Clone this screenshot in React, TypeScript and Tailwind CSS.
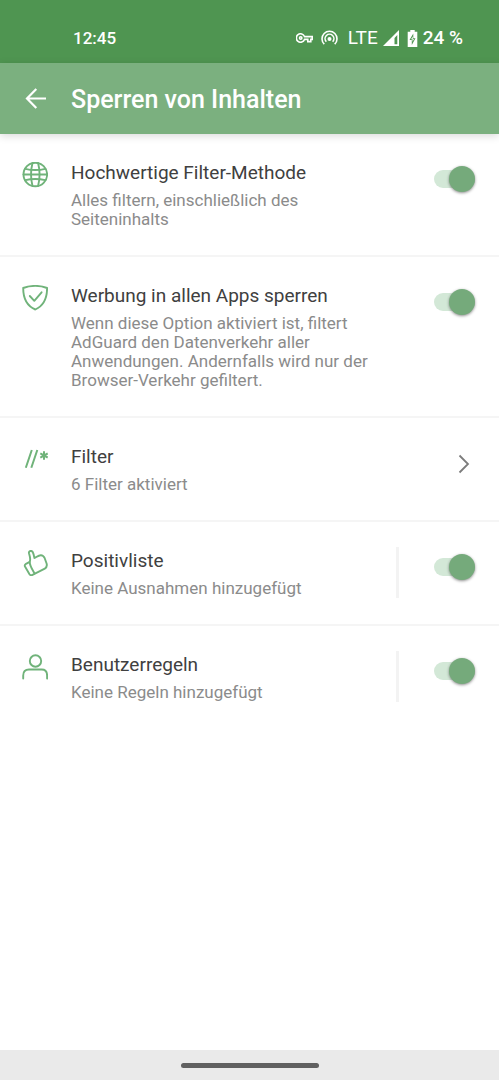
import React from "react";

interface SettingRowProps {
  id: string;
  icon: React.ReactNode;
  title: string;
  description: string;
  divided?: boolean;
  link?: boolean;
}

const iconProps = {
  width: 26,
  height: 26,
  viewBox: "0 0 26 26",
  fill: "none",
  stroke: "currentColor",
  strokeWidth: 1.9,
  strokeLinecap: "round",
  strokeLinejoin: "round",
  "aria-hidden": true
} as const;

function GlobeIcon() {
  return (
    <svg {...iconProps}>
      <circle cx="13.300" cy="12.5" r="11.8" />
      <path d="M10.500 1C8.700 8 8.700 17 10.500 24M16.100 1C17.900 8 17.900 17 16.100 24" />
      <path d="M3.300 6.800C9.300 8.300 17.300 8.300 23.300 6.800M1.500 12.500H25.100M3.300 18.200C9.300 16.700 17.300 16.700 23.300 18.200" />
    </svg>
  );
}

function ShieldIcon() {
  return (
    <svg {...iconProps}>
      <path d="M13.300 .9C9.300 .9 4.800 1.500 1.200 3C1.200 12.500 3.800 20.500 13.300 24.500C22.500 20.500 25.100 12.500 25.100 3C21.500 1.500 17.300 .9 13.300 .9Z" />
      <path d="M7.800 11L12.300 15.800L19.600 7.300" />
    </svg>
  );
}

function FilterIcon() {
  return (
    <svg {...iconProps} strokeLinecap="butt">
      <path d="M3.800 21.800L9.800 4M9.300 21.800L15.300 4" strokeWidth="2" />
      <path d="M22 5.200V13.800M18.300 7.400L25.700 11.600M18.300 11.600L25.700 7.400" strokeWidth="2" />
    </svg>
  );
}

function ThumbIcon() {
  return (
    <svg {...iconProps}>
      <path d="M4 13.800L7.700 11.800C9 9.200 7.600 5.500 7 3.300C6.400.8 9.700.2 10.700 2C11.700 3.900 12 6 12.400 8C14.500 7 16.500 5.300 18.800 5.200C21 5.100 22 6.700 22.700 8.200L24.600 13.500C25.300 16 24.600 17.500 22.800 18.600L10.500 24.800C9.200 25.500 8.200 25.200 7.500 24.200L3 16.500C2.500 15.500 2.900 14.500 4 13.800Z" />
      <path d="M7.700 12C7.600 15.500 10 19 12.600 23.500" />
    </svg>
  );
}

function UserIcon() {
  return (
    <svg {...iconProps}>
      <circle cx="13.500" cy="7" r="5.700" />
      <path d="M1.200 24.500V21.500C1.200 17.500 3.200 15.500 7 15.500H19.700C23.500 15.500 25.100 17.500 25.100 21.500V24.500" />
    </svg>
  );
}

function StatusBar() {
  return (
    <div className="flex h-[63px] items-center bg-[#4f9551] pt-[13px] pr-9 pl-[73px] text-[19px] leading-6 font-medium text-white">
      <span className="text-[17px]">12:45</span>
      <div className="ml-auto flex items-center">
        <svg className="mr-2" width="17" height="10" viewBox="0 0 17 10" fill="none" stroke="currentColor" strokeWidth="1.600" aria-hidden="true">
          <path d="M8.500 3.600H16.200V6.400H14.800V8.600H11.800V6.400H8.500A4.200 4.200 0 1 1 8.500 3.600Z" />
          <circle cx="4.700" cy="5" r="1.200" />
        </svg>
        <svg className="mr-[10px]" width="17" height="16" viewBox="0 0 17 16" fill="none" stroke="currentColor" strokeWidth="1.600" aria-hidden="true">
          <path d="M3.300 14.200A7.500 7.500 0 1 1 13.700 14.200M5.300 11.700A4.400 4.400 0 1 1 11.700 11.700" />
          <circle cx="8.500" cy="9" r="2" fill="currentColor" stroke="none" />
        </svg>
        <span className="mr-[5px] font-normal">LTE</span>
        <svg className="mr-[7px]" width="17" height="16" viewBox="0 0 17 16" fill="currentColor" aria-hidden="true">
          <path fillRule="evenodd" d="M16 0V16H0ZM14.300 5L11.500 8V14.300H14.300Z" />
        </svg>
        <svg className="mr-[5px]" width="11" height="17" viewBox="0 0 11 17" aria-hidden="true">
          <path
            fill="currentColor"
            fillRule="evenodd"
            d="M3.300 0H7.700V1.800H10.300V17H.7V1.800H3.300ZM6.300 3.500L2.500 10H4.800V15L8.500 8.200H6.300Z"
          />
          <path d="M5.800 6.500L4 9.200H5.500V11.800L7 9H5.800Z" fill="currentColor" />
        </svg>
        <span>24 %</span>
      </div>
    </div>
  );
}

function SettingRow({ id, icon, title, description, divided, link }: SettingRowProps) {
  const text = (
    <>
      <span className="block text-[19px] leading-7 text-[#404040]">{title}</span>
      <span className="mt-1 block text-[17px] leading-[19px] text-[#8b8b8b]">{description}</span>
    </>
  );

  return (
    <li className="border-b-2 border-[#f5f5f5] px-[22px] pt-[25px] pb-[26px] last:border-b-0">
      <div className="flex items-start">
        <span className="mt-[3px] mr-[23px] shrink-0 text-[#70b37a]">{icon}</span>
        {link ? (
          <a href={`#${id}`} className="flex flex-1 items-start">
            <span className="flex-1">{text}</span>
            <svg className="mt-[11px] mr-[6px]" width="14" height="20" viewBox="0 0 14 20" fill="none" stroke="#7c7c7c" strokeWidth="1.800" aria-hidden="true">
              <path d="M2.500 1.500L11 10L2.500 18.500" />
            </svg>
          </a>
        ) : (
          <>
            <label htmlFor={id} className="mr-[22px] flex-1">
              {text}
            </label>
            <span className={divided ? "h-[51px] w-[3px] bg-[#f3f3f3]" : "w-[3px]"} />
            <input
              id={id}
              type="checkbox"
              defaultChecked
              className="mt-[11px] mr-[2px] ml-[35px] flex h-[18px] w-[41px] shrink-0 appearance-none items-center rounded-full bg-[#d3e8d7] before:size-[26px] before:rounded-full before:bg-white before:shadow-[0_1px_3px_rgba(0,0,0,0.45)] checked:justify-end checked:before:bg-[#75aa7b]"
            />
          </>
        )}
      </div>
    </li>
  );
}

export default function App() {
  return (
    <div className="flex min-h-screen flex-col bg-white font-['Roboto',sans-serif]">
      <StatusBar />
      <header className="flex h-[71px] items-center bg-[#7bb07f] pl-[22px] text-white shadow-[0_2px_8px_rgba(0,0,0,0.15)]">
        <button type="button" aria-label="Zurück" className="mr-[23px]">
          <svg className="block" width="26" height="26" viewBox="0 0 26 26" fill="none" stroke="currentColor" strokeWidth="2.200" aria-hidden="true">
            <path d="M24 12.500H5.500M14.300 3L5 12.500L14.300 22" />
          </svg>
        </button>
        <h1 className="pt-[2px] text-[25px] leading-8 font-medium">Sperren von Inhalten</h1>
      </header>
      <main className="flex-1">
        <ul>
          <SettingRow
            id="filter-methode"
            icon={<GlobeIcon />}
            title="Hochwertige Filter-Methode"
            description="Alles filtern, einschließlich des Seiteninhalts"
          />
          <SettingRow
            id="werbung"
            icon={<ShieldIcon />}
            title="Werbung in allen Apps sperren"
            description="Wenn diese Option aktiviert ist, filtert AdGuard den Datenverkehr aller Anwendungen. Andernfalls wird nur der Browser-Verkehr gefiltert."
          />
          <SettingRow id="filter" icon={<FilterIcon />} title="Filter" description="6 Filter aktiviert" link />
          <SettingRow
            id="positivliste"
            icon={<ThumbIcon />}
            title="Positivliste"
            description="Keine Ausnahmen hinzugefügt"
            divided
          />
          <SettingRow
            id="benutzerregeln"
            icon={<UserIcon />}
            title="Benutzerregeln"
            description="Keine Regeln hinzugefügt"
            divided
          />
        </ul>
      </main>
      <footer className="flex h-[30px] items-center justify-center bg-[#eaeaea]">
        <div className="h-[5px] w-[138px] rounded-full bg-[#606060]" />
      </footer>
    </div>
  );
}
